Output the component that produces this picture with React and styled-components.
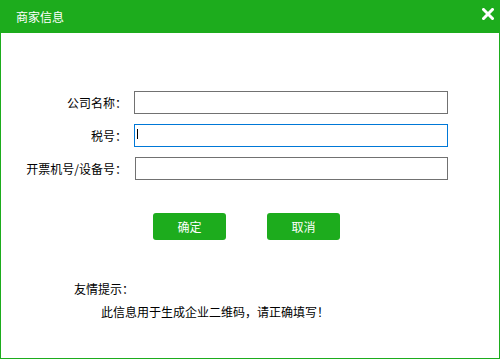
import React from "react";
import styled, { createGlobalStyle } from "styled-components";

const GlobalStyle = createGlobalStyle`
  html, body {
    margin: 0;
    padding: 0;
    background: #ffffff;
  }
  body {
    font-family: "Noto Sans CJK SC", "Noto Sans", sans-serif;
    font-size: 12px;
    color: #000;
  }
`;

const green = "#1dac1d";

function CloseIcon() {
  return (
    <svg width="12" height="12" viewBox="0 0 12 12">
      <path
        d="M1.5 1.5 L10.5 10.5 M10.5 1.5 L1.5 10.5"
        stroke="#fff"
        strokeWidth="3"
        strokeLinecap="square"
      />
    </svg>
  );
}

function App() {
  return (
    <>
      <GlobalStyle />
      <Dialog>
        <Header>
          <Title>商家信息</Title>
          <CloseButton>
            <CloseIcon />
          </CloseButton>
        </Header>
        <Body>
          <Form>
            <Label>公司名称：</Label>
            <Field>
              <Input />
            </Field>
            <Label>税号：</Label>
            <Field>
              <Input focused />
              <Caret />
            </Field>
            <Label>开票机号/设备号：</Label>
            <Field shift={1}>
              <Input />
            </Field>
          </Form>
          <Buttons>
            <Button>确定</Button>
            <Button>取消</Button>
          </Buttons>
          <Tips>
            <TipTitle>友情提示：</TipTitle>
            <TipText>此信息用于生成企业二维码，请正确填写！</TipText>
          </Tips>
        </Body>
      </Dialog>
    </>
  );
}

const Dialog = styled.div`
  width: 500px;
  height: 359px;
  box-sizing: border-box;
  border: 1px solid ${green};
  border-top: none;
  display: flex;
  flex-direction: column;
  overflow: hidden;
`;

const Header = styled.div`
  height: 33px;
  margin: 0 -1px;
  background: ${green};
  display: flex;
  align-items: center;
  justify-content: space-between;
  padding: 0 6px 0 16px;
`;

const Title = styled.span`
  color: #fff;
  font-size: 12px;
  line-height: 14px;
  margin-top: 1px;
`;

const CloseButton = styled.div`
  width: 12px;
  height: 12px;
  display: flex;
  margin-top: -5px;
  cursor: pointer;
`;

const Body = styled.div`
  flex: 1;
  display: flex;
  flex-direction: column;
  padding-top: 58px;
`;

const Form = styled.div`
  display: grid;
  grid-template-columns: 126px 314px;
  column-gap: 7px;
  row-gap: 10px;
  align-items: center;
`;

const Label = styled.label`
  text-align: right;
  font-size: 12px;
  line-height: 23px;
  white-space: nowrap;
`;

const Field = styled.div`
  position: relative;
  height: 23px;
  margin-left: ${(p) => p.shift || 0}px;
`;

const Input = styled.input`
  display: block;
  width: 100%;
  height: 23px;
  box-sizing: border-box;
  margin: 0;
  padding: 0 4px;
  border: 1px solid ${(p) => (p.focused ? "#0078d7" : "#717171")};
  outline: none;
  background: #fff;
  font-family: inherit;
  font-size: 12px;
`;

const Caret = styled.span`
  position: absolute;
  left: 3px;
  top: 5px;
  width: 1px;
  height: 10px;
  background: #000;
`;

const Buttons = styled.div`
  display: flex;
  gap: 41px;
  padding-left: 152px;
  margin-top: 33px;
`;

const Button = styled.button`
  width: 73px;
  height: 27px;
  border: none;
  border-radius: 3px;
  background: ${green};
  color: #fff;
  font-family: inherit;
  font-size: 12px;
  padding: 0;
  cursor: pointer;
`;

const Tips = styled.div`
  margin-top: 41px;
  padding-left: 73px;
  display: flex;
  flex-direction: column;
  gap: 7px;
`;

const TipTitle = styled.div`
  font-size: 12px;
  line-height: 16px;
`;

const TipText = styled.div`
  font-size: 12px;
  line-height: 16px;
  padding-left: 27px;
`;

export default App;
